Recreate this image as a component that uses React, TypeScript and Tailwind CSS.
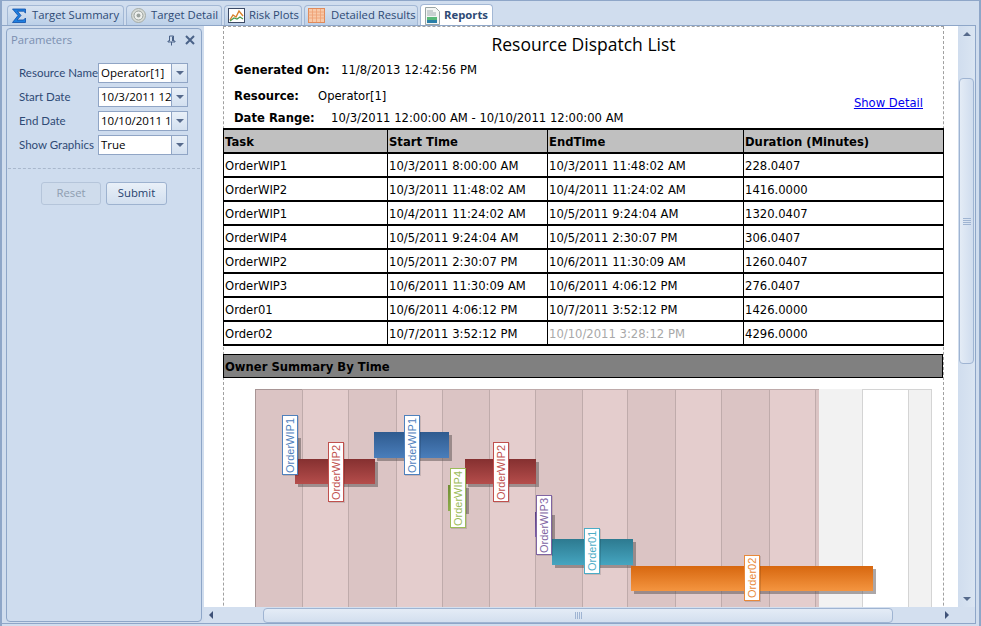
const tabs = [
  { name: 'Target Summary', icon: 'sigma', cls: 'w-[117px] gap-[4px]' },
  { name: 'Target Detail', icon: 'target', cls: 'w-[96px] gap-[4px]' },
  { name: 'Risk Plots', icon: 'plot', cls: 'w-[78px] gap-[4px]' },
  { name: 'Detailed Results', icon: 'grid', cls: 'w-[114px] gap-[6px]' },
];

const rows = [
  ['OrderWIP1', '10/3/2011 8:00:00 AM', '10/3/2011 11:48:02 AM', '228.0407'],
  ['OrderWIP2', '10/3/2011 11:48:02 AM', '10/4/2011 11:24:02 AM', '1416.0000'],
  ['OrderWIP1', '10/4/2011 11:24:02 AM', '10/5/2011 9:24:04 AM', '1320.0407'],
  ['OrderWIP4', '10/5/2011 9:24:04 AM', '10/5/2011 2:30:07 PM', '306.0407'],
  ['OrderWIP2', '10/5/2011 2:30:07 PM', '10/6/2011 11:30:09 AM', '1260.0407'],
  ['OrderWIP3', '10/6/2011 11:30:09 AM', '10/6/2011 4:06:12 PM', '276.0407'],
  ['Order01', '10/6/2011 4:06:12 PM', '10/7/2011 3:52:12 PM', '1426.0000'],
  ['Order02', '10/7/2011 3:52:12 PM', '10/10/2011 3:28:12 PM', '4296.0000'],
];

// chart columns: width, fill, line colour on the left and top
const bands = [
  [47, '#dbc4c4', '#a89595'], [46, '#e4cdcd', '#bfabab'], [48, '#dbc4c4', '#bfabab'], [46, '#e4cdcd', '#bfabab'],
  [47, '#dbc4c4', '#bfabab'], [46, '#e4cdcd', '#bfabab'], [47, '#dbc4c4', '#bfabab'], [46, '#e4cdcd', '#bfabab'],
  [48, '#dbc4c4', '#bfabab'], [46, '#e4cdcd', '#bfabab'], [48, '#dbc4c4', '#bfabab'], [46, '#e4cdcd', '#bfabab'],
  [4, '#dbc4c4', '#bfabab'], [43, '#f2f2f2', '#f2f2f2'], [46, '#ffffff', '#d4d4d4'], [23, '#f2f2f2', '#d4d4d4'],
] as const;

const bars = [
  { x: 27, y: 46, w: 16, h: 25, from: '#2f5b8f', to: '#4a7ebb' },
  { x: 40, y: 70, w: 80, h: 25, from: '#853030', to: '#b54d4b' },
  { x: 119, y: 43, w: 75, h: 26, from: '#2f5b8f', to: '#4a7ebb' },
  { x: 193, y: 96, w: 18, h: 26, from: '#6f8c34', to: '#8fae4e' },
  { x: 210, y: 70, w: 71, h: 25, from: '#853030', to: '#b54d4b' },
  { x: 280, y: 123, w: 17, h: 25, from: '#5a4080', to: '#7c5fa5' },
  { x: 297, y: 150, w: 81, h: 26, from: '#2d7a90', to: '#45a5c0' },
  { x: 376, y: 177, w: 242, h: 25, from: '#d7670f', to: '#f49540' },
];

const labels = [
  { text: 'OrderWIP1', x: 27, y: 26, h: 60, color: 'text-[#4f81bd] border-[#4f81bd]' },
  { text: 'OrderWIP2', x: 73, y: 53, h: 60, color: 'text-[#c0504d] border-[#c0504d]' },
  { text: 'OrderWIP1', x: 149, y: 26, h: 60, color: 'text-[#4f81bd] border-[#4f81bd]' },
  { text: 'OrderWIP4', x: 195, y: 79, h: 60, color: 'text-[#9bbb59] border-[#9bbb59]' },
  { text: 'OrderWIP2', x: 238, y: 53, h: 60, color: 'text-[#c0504d] border-[#c0504d]' },
  { text: 'OrderWIP3', x: 281, y: 106, h: 60, color: 'text-[#8064a2] border-[#8064a2]' },
  { text: 'Order01', x: 329, y: 139, h: 46, color: 'text-[#4bacc6] border-[#4bacc6]' },
  { text: 'Order02', x: 489, y: 166, h: 46, color: 'text-[#e8893a] border-[#e8893a]' },
];

function TabIcon({ kind }: { kind: string }) {
  if (kind === 'sigma')
    return (
      <svg width="17" height="17" viewBox="0 0 17 17" className="shrink-0">
        <path d="M1.500 2h13v4l-2-1.800H6.500L10 8.500l-4 4.500h6.500l2-2v4.500h-13L7 8.500z" fill="#1f7fe0" stroke="#0f4fa8" strokeWidth="0.800" />
      </svg>
    );
  if (kind === 'target')
    return (
      <svg width="17" height="17" viewBox="0 0 17 17" className="shrink-0">
        <circle cx="8.500" cy="8.500" r="7" fill="#d8dcd8" stroke="#a5aca8" />
        <circle cx="8.500" cy="8.500" r="4.500" fill="#eef0ee" stroke="#98a09c" />
        <circle cx="8.500" cy="8.500" r="2" fill="#9aa29e" />
      </svg>
    );
  if (kind === 'plot')
    return (
      <svg width="17" height="17" viewBox="0 0 17 17" className="shrink-0">
        <rect x="0.500" y="1.500" width="16" height="14" fill="#fff" stroke="#3c4a66" />
        <path d="M2 13 5 8l3 2 3-6 4 5" fill="none" stroke="#d9822b" strokeWidth="1.400" />
        <path d="M2 14l4-3 3 1 3-2 3 2" fill="none" stroke="#4b9a4b" strokeWidth="1.200" />
      </svg>
    );
  if (kind === 'grid')
    return (
      <svg width="17" height="17" viewBox="0 0 17 17" className="shrink-0">
        <rect x="0.500" y="1.500" width="16" height="14" fill="#f8c9a8" stroke="#e08a5a" />
        <path d="M0.500 5h16M0.500 8h16M0.500 11h16M4.500 2v13M8.500 2v13M12.500 2v13" stroke="#ee9f72" strokeWidth="0.800" />
      </svg>
    );
  return (
    <svg width="17" height="18" viewBox="0 0 17 18" className="shrink-0">
      <path d="M1.500 0.500h10l4 4v13h-14z" fill="#f4f6f4" stroke="#9aa5a5" />
      <path d="M3 4h6M3 6h9M3 8h9" stroke="#8a9aa0" strokeWidth="0.800" />
      <rect x="3" y="10" width="10" height="3" fill="#58b878" />
      <rect x="3" y="13" width="10" height="3" fill="#2a7fa8" />
    </svg>
  );
}

function Field({ label, value }: { label: string; value: string }) {
  return (
    <div className="flex h-5 items-center">
      <span className="w-[79px] shrink-0 whitespace-nowrap font-['Lato',sans-serif] text-[11.5px] text-[#2e4a75]">{label}</span>
      <div className="flex h-5 w-[90px] border border-[#90a5c5] bg-white">
        <span className="flex-1 overflow-hidden whitespace-nowrap pl-[2px] text-[11.5px] leading-[18px] text-black">{value}</span>
        <span className="flex w-[16px] shrink-0 items-center justify-center border-l border-[#90a5c5] bg-gradient-to-b from-[#e9f0f8] to-[#d3e0f0]">
          <span className="h-0 w-0 border-x-[4px] border-t-[4px] border-x-transparent border-t-[#566a8c]" />
        </span>
      </div>
    </div>
  );
}

function Sidebar() {
  return (
    <div className="ml-[4px] mt-[2px] mb-px w-[196px] shrink-0 rounded-sm border border-[#8ea6c8] bg-[#cedcee]">
      <div className="flex h-[22px] items-center justify-between pl-1 pr-[6px] text-[11.3px] text-[#7b8fb0]">
        <span>Parameters</span>
        <span className="flex items-center gap-[9px]">
          <svg width="9" height="11" viewBox="0 0 9 11">
            <path d="M2.500 1h4v5h1.500v1H1V6h1.500zM4.500 7v3.500M5.500 1.500V6" fill="none" stroke="#4a6288" />
          </svg>
          <svg width="10" height="10" viewBox="0 0 10 10">
            <path d="M1 1l8 8M9 1l-8 8" stroke="#4a6288" strokeWidth="2" />
          </svg>
        </span>
      </div>
      <div className="flex flex-col gap-1 pl-3 pt-[12px]">
        <Field label="Resource Name" value="Operator[1]" />
        <Field label="Start Date" value="10/3/2011 12:00:00 AM" />
        <Field label="End Date" value="10/10/2011 12:00:00 AM" />
        <Field label="Show Graphics" value="True" />
      </div>
      <div className="mx-[1px] mt-[13px] border-t border-dashed border-[#a9b8cd]" />
      <div className="flex gap-[5px] pl-[34px] pt-[13px] text-[11.3px]">
        <button className="h-[23px] w-[60px] rounded-[3px] border border-[#b5c5da] bg-[#cfdcec] text-[#8e9cb0]">Reset</button>
        <button className="h-[23px] w-[61px] rounded-[3px] border border-[#9db2cf] bg-gradient-to-b from-[#e9f0f8] to-[#d2dfef] text-[#25426e]">Submit</button>
      </div>
    </div>
  );
}

function Chart() {
  return (
    <div className="relative ml-[31px] mt-[11px] flex h-[300px] w-[677px] border-r border-[#d4d4d4]">
      {bands.map(([w, color, line], i) => (
        <div key={i} className="h-full border-l border-t" style={{ width: w, background: color, borderColor: line }} />
      ))}
      {bars.map((b, i) => (
        <div
          key={i}
          className="absolute shadow-[3px_3px_0_rgba(90,80,80,0.5)]"
          style={{ left: b.x, top: b.y, width: b.w, height: b.h, background: `linear-gradient(${b.from}, ${b.to})` }}
        />
      ))}
      {labels.map((l, i) => (
        <div
          key={i}
          className={`absolute flex w-[16px] rotate-180 items-center justify-center border bg-white font-['Liberation_Sans',sans-serif] text-[11px] leading-[14px] whitespace-nowrap shadow-[-1px_-1px_0_rgba(0,0,0,0.12)] [writing-mode:vertical-rl] ${l.color}`}
          style={{ left: l.x, top: l.y, height: l.h }}
        >
          {l.text}
        </div>
      ))}
    </div>
  );
}

function Report() {
  return (
    <div className="flex-1 overflow-hidden bg-white">
      <div className="ml-[19px] h-[700px] w-[721px] border-x border-t border-dashed border-[#a0a0a0] font-['DejaVu_Sans',sans-serif] text-[11.6px] text-black">
        <div className="pt-[6px] text-center font-['Open_Sans',sans-serif] text-[17.5px] leading-[22px]">Resource Dispatch List</div>
        <div className="relative h-[73px] pl-[10px]">
          <div className="flex pt-[6px] leading-[18px]">
            <b className="w-[107px]">Generated On:</b>
            <span>11/8/2013 12:42:56 PM</span>
          </div>
          <div className="flex pt-[8px] leading-[18px]">
            <b className="w-[84px]">Resource:</b>
            <span>Operator[1]</span>
          </div>
          <div className="flex pt-[4px] leading-[18px]">
            <b className="w-[97px]">Date Range:</b>
            <span>10/3/2011 12:00:00 AM - 10/10/2011 12:00:00 AM</span>
          </div>
          <a className="absolute right-[20px] top-[40px] text-[#0000ee] underline" href="#detail">Show Detail</a>
        </div>
        <table className="-ml-px w-[720px] table-fixed border-collapse">
          <colgroup>
            <col className="w-[164px]" />
            <col className="w-[160px]" />
            <col className="w-[196px]" />
            <col className="w-[200px]" />
          </colgroup>
          <thead>
            <tr className="h-[24px] border-y-2 border-black bg-[#c0c0c0] text-left">
              {['Task', 'Start Time', 'EndTime', 'Duration (Minutes)'].map((h) => (
                <th key={h} className="border-x border-black pl-[1px] pt-[4px] font-bold">{h}</th>
              ))}
            </tr>
          </thead>
          <tbody>
            {rows.map((r, i) => (
              <tr key={i} className="h-[24px] border-b-2 border-black">
                {r.map((c, j) => (
                  <td key={j} className={`border-x border-black pl-[1px] pt-[4px] whitespace-nowrap ${i === 7 && j === 2 ? 'text-[#a8a8a8]' : ''}`}>{c}</td>
                ))}
              </tr>
            ))}
          </tbody>
        </table>
        <div className="-ml-px mt-[8px] h-[24px] w-[720px] border border-black bg-[#808080] pl-[1px] font-bold leading-[24px]">Owner Summary By Time</div>
        <Chart />
      </div>
    </div>
  );
}

function VScroll() {
  return (
    <div className="flex w-[17px] shrink-0 flex-col items-center bg-gradient-to-r from-[#d0ddee] to-[#dae5f2]">
      <span className="mt-[6px] h-0 w-0 border-x-[4px] border-b-[4px] border-x-transparent border-b-[#566a8c]" />
      <div className="mt-[42px] flex h-[286px] w-[15px] flex-col items-center justify-center gap-px rounded-sm border border-[#9fb4d2] bg-gradient-to-r from-[#e4ecf6] to-[#cfdcee]">
        <span className="h-px w-[8px] bg-[#9fb4d2]" />
        <span className="h-px w-[8px] bg-[#9fb4d2]" />
        <span className="h-px w-[8px] bg-[#9fb4d2]" />
        <span className="h-px w-[8px] bg-[#9fb4d2]" />
      </div>
      <span className="mt-auto mb-[6px] h-0 w-0 border-x-[4px] border-t-[4px] border-x-transparent border-t-[#566a8c]" />
    </div>
  );
}

function HScroll() {
  return (
    <div className="flex h-[16px] shrink-0 items-center bg-[#d3dfef]">
      <span className="ml-[5px] h-0 w-0 border-y-[4px] border-r-[4px] border-y-transparent border-r-[#3f5278]" />
      <div className="ml-[50px] flex h-[15px] w-[630px] items-center justify-center gap-px rounded-sm border border-[#9fb4d2] bg-gradient-to-b from-[#e4ecf6] to-[#d3dfef]">
        <span className="h-[7px] w-px bg-[#9fb4d2]" />
        <span className="h-[7px] w-px bg-[#9fb4d2]" />
        <span className="h-[7px] w-px bg-[#9fb4d2]" />
        <span className="h-[7px] w-px bg-[#9fb4d2]" />
      </div>
      <span className="ml-[52px] h-0 w-0 border-y-[4px] border-l-[4px] border-y-transparent border-l-[#3f5278]" />
    </div>
  );
}

export default function App() {
  return (
    <div className="flex h-[626px] w-[981px] flex-col overflow-hidden border-x-2 border-t border-[#8ea6c8] bg-[#d0ddee] font-['Open_Sans',sans-serif] text-[11.3px]">
      <div className="flex h-[24px] shrink-0 items-end gap-[2px] pl-[5px]">
        {tabs.map((t) => (
          <div key={t.name} className={`flex h-[20px] items-center rounded-t-sm border border-b-0 border-[#a3b8d5] bg-gradient-to-b from-[#d8e3f1] to-[#bcd0e8] pl-[3px] whitespace-nowrap text-[#2e4a75] ${t.cls}`}>
            <TabIcon kind={t.icon} />
            <span>{t.name}</span>
          </div>
        ))}
        <div className="-mb-px flex h-[22px] w-[73px] items-center gap-[3px] rounded-t-sm border border-b-0 border-[#a3b8d5] bg-white pl-[3px] font-bold text-[#2e4a75]">
          <TabIcon kind="report" />
          <span>Reports</span>
        </div>
      </div>
      <div className="mr-[3px] mb-[2px] flex min-h-0 flex-1 border-y border-r border-[#8ea6c8]">
        <Sidebar />
        <div className="ml-[2px] flex min-w-0 flex-1 flex-col">
          <div className="flex min-h-0 flex-1">
            <Report />
            <VScroll />
          </div>
          <HScroll />
        </div>
      </div>
    </div>
  );
}
